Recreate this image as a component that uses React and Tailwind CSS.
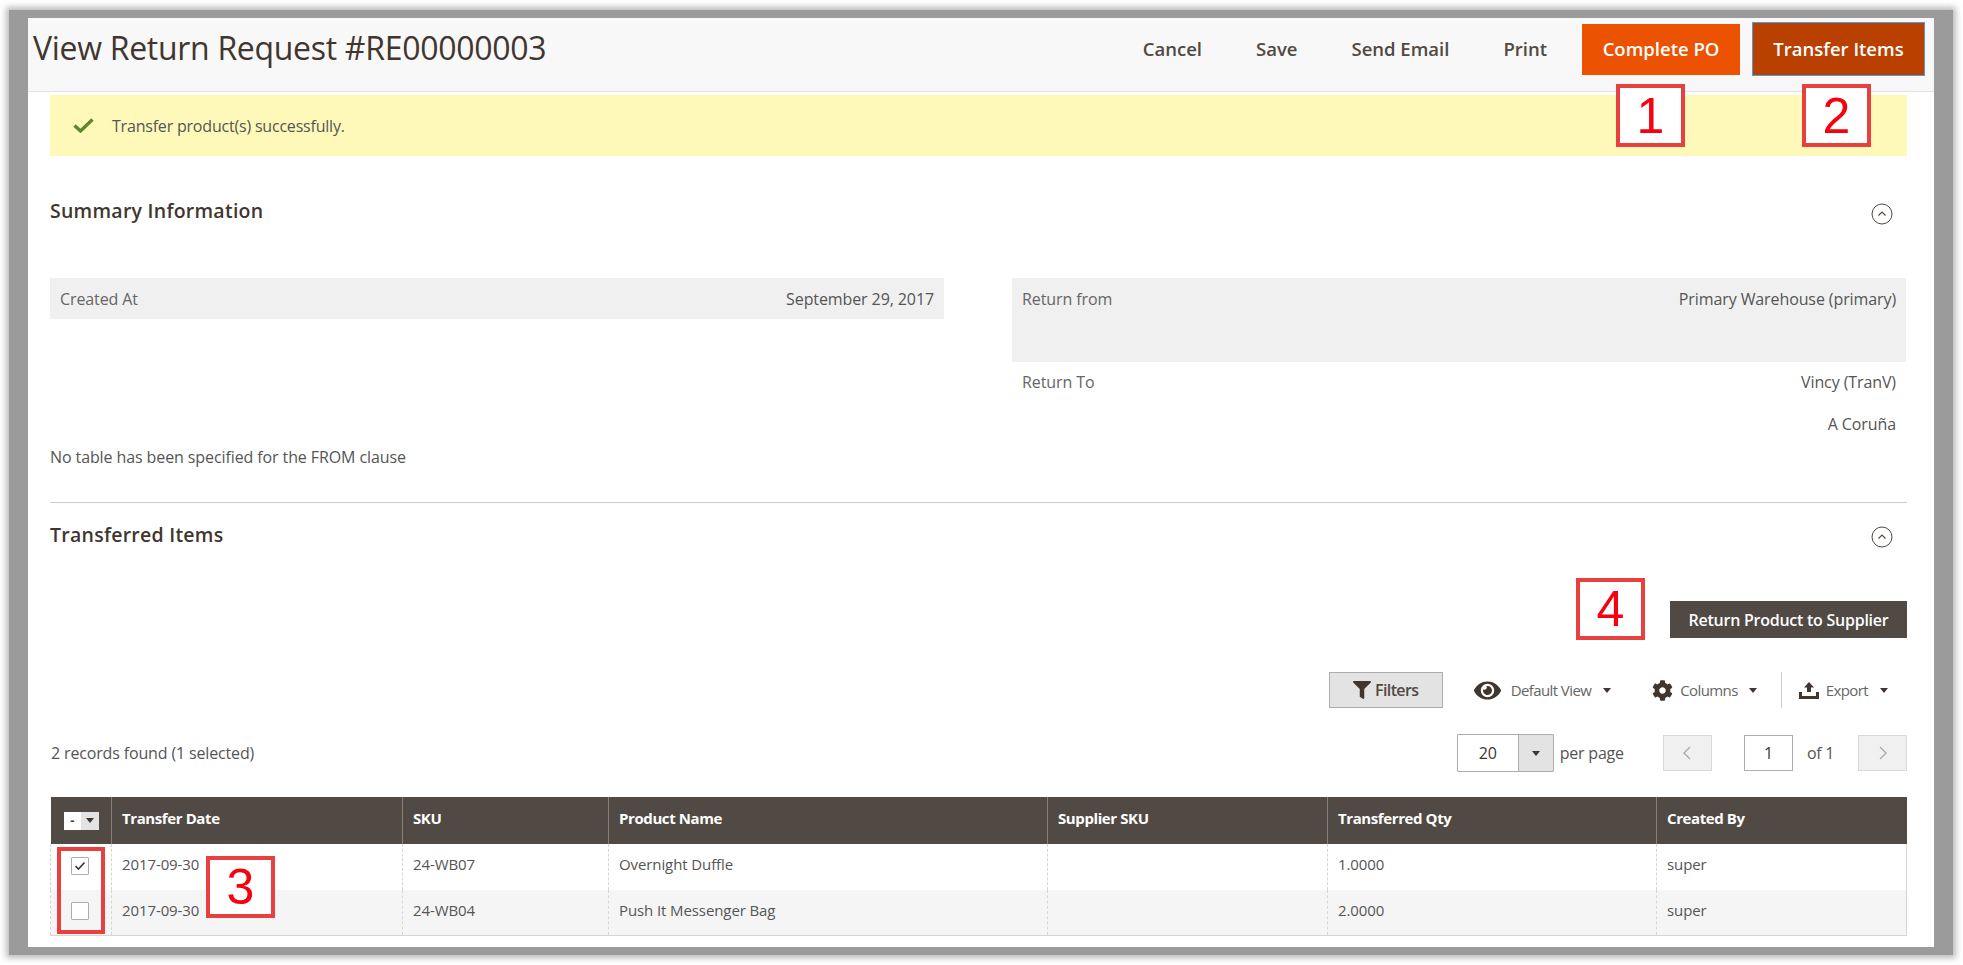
import React from 'react';
import { FaFilter, FaEye, FaCog } from 'react-icons/fa';

const font = { fontFamily: '"Open Sans", sans-serif' };

const Caret = () => (
  <span className="inline-block w-0 h-0 border-x-[4px] border-x-transparent border-t-[5px] border-t-[#41362f]" />
);

const CollapseIcon = () => (
  <svg width="22" height="22" viewBox="0 0 22 22" fill="none" stroke="#514943" strokeWidth="1">
    <circle cx="11" cy="11" r="10" />
    <path d="M7.5 12.5 L11 9 L14.5 12.5" strokeWidth="1.2" />
  </svg>
);

const ExportIcon = () => (
  <svg width="20" height="17" viewBox="0 0 20 17" fill="#41362f">
    <path d="M10 0 L15 5.5 H12 V10 H8 V5.5 H5 Z" />
    <path d="M0 10 H3 V14 H17 V10 H20 V17 H0 Z" />
  </svg>
);

const Annotation = ({ children, className }) => (
  <div className={`absolute flex items-center justify-center bg-white border-[4px] border-[#e8403f] text-[#f5010f] text-[50px] font-normal leading-none ${className}`} style={{ fontFamily: '"Liberation Sans", sans-serif' }}>
    {children}
  </div>
);

const InfoRow = ({ label, value, className }) => (
  <div className={`flex justify-between px-[10px] text-[16px] tracking-[-0.1px] text-[#666] ${className}`}>
    <span>{label}</span>
    <span className="text-[#555]">{value}</span>
  </div>
);

const rows = [
  { date: '2017-09-30', sku: '24-WB07', name: 'Overnight Duffle', qty: '1.0000', by: 'super', checked: true },
  { date: '2017-09-30', sku: '24-WB04', name: 'Push It Messenger Bag', qty: '2.0000', by: 'super', checked: false },
];

const headers = [
  ['Transfer Date', 'w-[291px]'],
  ['SKU', 'w-[206px]'],
  ['Product Name', 'w-[439px]'],
  ['Supplier SKU', 'w-[280px]'],
  ['Transferred Qty', 'w-[329px]'],
  ['Created By', 'w-[250px]'],
];

export default function App() {
  return (
    <div className="w-[1963px] h-[965px] bg-white pl-[9px] pt-[10px] overflow-hidden" style={font}>
      <div className="relative w-[1944px] h-[945px] border-x-[19px] border-y-[8px] border-[#9b9b9b] bg-white shadow-[0_0_6px_3px_rgba(120,120,120,0.5)]">
        {/* Page header */}
        <div className="flex items-center justify-between h-[74px] bg-[#f8f8f8] border-b border-[#e3e3e3] pl-[5px] pr-[9px] pb-[11px]">
          <h1 className="text-[32px] font-normal text-[#41362f] tracking-[-0.3px] leading-none -mt-[3px]">View Return Request #RE00000003</h1>
          <div className="flex items-center text-[#514943] text-[18.5px] font-semibold">
            <span className="mr-[54px]">Cancel</span>
            <span className="mr-[54px]">Save</span>
            <span className="mr-[54px]">Send Email</span>
            <span className="mr-[35px]">Print</span>
            <button className="w-[158px] h-[51px] bg-[#eb5202] text-white font-semibold mr-[12px]">Complete PO</button>
            <button className="w-[173px] h-[54px] bg-[#ba4000] border border-[#4a9be0] text-white font-semibold">Transfer Items</button>
          </div>
        </div>

        <div className="pl-[22px] pr-[27px] text-[#41362f]">
          {/* Success message */}
          <div className="flex items-center h-[61px] mt-[3px] bg-[#fff9b9] pl-[23px]">
            <svg width="21" height="15" viewBox="0 0 21 15" fill="none" stroke="#5b8a2d" strokeWidth="3.4">
              <path d="M1.5 7.5 L7.5 13 L19.5 1.5" />
            </svg>
            <span className="ml-[18px] text-[16px] tracking-[-0.2px] text-[#555]">Transfer product(s) successfully.</span>
          </div>

          {/* Summary */}
          <div className="flex items-center justify-between h-[22px] mt-[44px] pr-[14px]">
            <h2 className="text-[19.5px] font-semibold tracking-[0.25px] text-[#41362f] leading-none">Summary Information</h2>
            <span className="mt-[6px]"><CollapseIcon /></span>
          </div>

          <div className="flex mt-[56px] h-[224px]">
            <div className="w-[894px] flex flex-col">
              <InfoRow label="Created At" value="September 29, 2017" className="items-center h-[41px] bg-[#f0f0f0]" />
              <p className="mt-[126px] text-[16px] tracking-[-0.1px] text-[#555]">No table has been specified for the FROM clause</p>
            </div>
            <div className="w-[894px] ml-[68px]">
              <InfoRow label="Return from" value="Primary Warehouse (primary)" className="h-[84px] pt-[9px] bg-[#f0f0f0]" />
              <InfoRow label="Return To" value="Vincy (TranV)" className="mt-[8px]" />
              <InfoRow label="" value="A Coruña" className="mt-[18px]" />
            </div>
          </div>

          <hr className="border-t border-[#cccccc]" />

          {/* Transferred items */}
          <div className="flex items-center justify-between h-[22px] mt-[21px] pr-[14px]">
            <h2 className="text-[19.5px] font-semibold tracking-[0.25px] text-[#41362f] leading-none">Transferred Items</h2>
            <span className="mt-[4px]"><CollapseIcon /></span>
          </div>

          <div className="flex justify-end mt-[55px]">
            <button className="w-[237px] h-[37px] bg-[#514943] text-white text-[16px] font-semibold tracking-[-0.25px]">Return Product to Supplier</button>
          </div>

          {/* Grid toolbar */}
          <div className="flex justify-end items-center h-[36px] mt-[34px] text-[15px] tracking-[-0.6px] text-[#666]">
            <button className="flex items-center justify-center gap-[4px] w-[114px] h-[36px] bg-[#e3e3e3] border border-[#adadad] text-[#514943] text-[16px] font-semibold">
              <FaFilter className="text-[#41362f] text-[18px]" /> Filters
            </button>
            <div className="flex items-center ml-[31px]">
              <FaEye className="text-[#41362f] text-[27px]" />
              <span className="ml-[10px]">Default View</span>
              <span className="ml-[12px] flex"><Caret /></span>
            </div>
            <div className="flex items-center ml-[41px]">
              <FaCog className="text-[#41362f] text-[21px]" />
              <span className="ml-[7px]">Columns</span>
              <span className="ml-[11px] flex"><Caret /></span>
            </div>
            <div className="w-px h-[36px] bg-[#cccccc] ml-[24px]" />
            <div className="flex items-center ml-[17px] mr-[19px]">
              <ExportIcon />
              <span className="ml-[7px]">Export</span>
              <span className="ml-[12px] flex"><Caret /></span>
            </div>
          </div>

          {/* Pager */}
          <div className="flex items-center h-[38px] mt-[26px] text-[16px] tracking-[-0.3px] text-[#555]">
            <span className="ml-px tracking-[-0.15px]">2 records found (1 selected)</span>
            <div className="flex items-center ml-auto">
              <div className="flex w-[97px] h-[38px] border border-[#adadad] rounded-[1px]">
                <span className="flex items-center justify-center w-[60px] bg-white text-[#41362f]">20</span>
                <span className="flex items-center justify-center flex-1 bg-[#e3e3e3] border-l border-[#adadad]"><Caret /></span>
              </div>
              <span className="ml-[6px] tracking-[-0.2px]">per page</span>
              <button className="flex items-center justify-center w-[49px] h-[36px] ml-[39px] bg-[#f0f0f0] border border-[#d9d9d9]">
                <svg width="10" height="16" viewBox="0 0 10 16" fill="none" stroke="#a8a8a8" strokeWidth="1.3"><path d="M8 2 L2 8 L8 14" /></svg>
              </button>
              <span className="flex items-center justify-center w-[49px] h-[36px] ml-[32px] border border-[#adadad] text-[#41362f]">1</span>
              <span className="ml-[14px]">of 1</span>
              <button className="flex items-center justify-center w-[49px] h-[36px] ml-[24px] bg-[#f0f0f0] border border-[#d9d9d9]">
                <svg width="10" height="16" viewBox="0 0 10 16" fill="none" stroke="#a8a8a8" strokeWidth="1.3"><path d="M2 2 L8 8 L2 14" /></svg>
              </button>
            </div>
          </div>

          {/* Data grid */}
          <table className="w-[1856px] table-fixed mt-[25px] border-collapse text-[15px] tracking-[-0.1px]">
            <thead>
              <tr className="h-[47px] bg-[#514943] text-white text-left">
                <th className="w-[61px] border-r border-[#8a8077] px-[13px]">
                  <div className="flex w-[35px] h-[18px] bg-white">
                    <span className="flex-1 flex items-center justify-center text-[#41362f] text-[13px] leading-none">-</span>
                    <span className="flex-1 flex items-center justify-center bg-[#e3e3e3]"><Caret /></span>
                  </div>
                </th>
                {headers.map(([title, width]) => (
                  <th key={title} className={`${width} px-[10px] pb-[5px] font-bold tracking-[-0.4px] border-r border-[#8a8077] last:border-r-0`}>{title}</th>
                ))}
              </tr>
            </thead>
            <tbody className="text-[#555] border-b border-[#d6d6d6]">
              {rows.map((row, index) => (
                <tr key={row.sku} className={index === 0 ? 'h-[46px] bg-white' : 'h-[45px] bg-[#f5f5f5]'}>
                  <td className="border-l border-r border-dashed border-[#d6d6d6] pl-[20px] pb-[2px]">
                    <span className="flex items-center justify-center w-[18px] h-[18px] bg-white border border-[#adadad] rounded-[1px]">
                      {row.checked && (
                        <svg width="12" height="10" viewBox="0 0 12 10" fill="none" stroke="#41362f" strokeWidth="1.6"><path d="M1.5 5 L4.5 8 L10.5 1.5" /></svg>
                      )}
                    </span>
                  </td>
                  <td className="px-[10px] pb-[5px] border-r border-dashed border-[#d6d6d6]">{row.date}</td>
                  <td className="px-[10px] pb-[5px] border-r border-dashed border-[#d6d6d6]">{row.sku}</td>
                  <td className="px-[10px] pb-[5px] border-r border-dashed border-[#d6d6d6]">{row.name}</td>
                  <td className="border-r border-dashed border-[#d6d6d6]" />
                  <td className="px-[10px] pb-[5px] border-r border-dashed border-[#d6d6d6]">{row.qty}</td>
                  <td className="px-[10px] pb-[5px] border-r border-[#d6d6d6]">{row.by}</td>
                </tr>
              ))}
            </tbody>
          </table>
        </div>

        {/* Red callouts drawn over the screenshot */}
        <Annotation className="left-[1588px] top-[66px] w-[69px] h-[63px]">1</Annotation>
        <Annotation className="left-[1774px] top-[66px] w-[69px] h-[63px]">2</Annotation>
        <Annotation className="left-[178px] top-[838px] w-[69px] h-[62px]">3</Annotation>
        <Annotation className="left-[1548px] top-[560px] w-[69px] h-[62px]">4</Annotation>
        <div className="absolute left-[29px] top-[829px] w-[48px] h-[87px] border-[4px] border-[#e8403f]" />
      </div>
    </div>
  );
}
